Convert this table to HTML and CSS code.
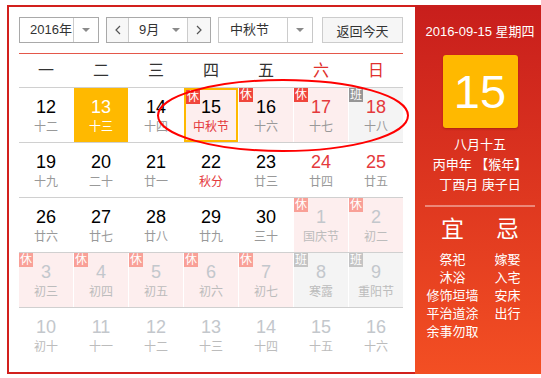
FILE: index.html
```html
<!DOCTYPE html>
<html lang="zh-CN">
<head>
<meta charset="utf-8">
<title>万年历</title>
<link rel="stylesheet" href="styles.css">
</head>
<body>
<div class="calendar">
  <div class="main">
    <div class="toolbar">
      <div class="select year"><span class="val">2016年</span><span class="drop"></span></div>
      <div class="month-group">
        <span class="nav prev"><svg width="6" height="10" viewBox="0 0 6 10"><polyline points="5,1 1,5 5,9" fill="none" stroke="#555" stroke-width="1.2"/></svg></span>
        <div class="month"><span class="val">9月</span><span class="drop plain"></span></div>
        <span class="nav next"><svg width="6" height="10" viewBox="0 0 6 10"><polyline points="1,1 5,5 1,9" fill="none" stroke="#555" stroke-width="1.2"/></svg></span>
      </div>
      <div class="select holiday"><span class="val">中秋节</span><span class="drop"></span></div>
      <button class="today-btn">返回今天</button>
    </div>
    <div class="rule"></div>
    <div class="weekdays">
      <span>一</span><span>二</span><span>三</span><span>四</span><span>五</span><span class="we">六</span><span class="we">日</span>
    </div>
    <div class="week">
      <div class="cell"><span class="num">12</span><span class="lunar">十二</span></div>
      <div class="cell today"><span class="num">13</span><span class="lunar">十三</span></div>
      <div class="cell"><span class="num">14</span><span class="lunar">十四</span></div>
      <div class="cell rest selected"><i class="tag">休</i><span class="num">15</span><span class="lunar fest">中秋节</span></div>
      <div class="cell rest"><i class="tag">休</i><span class="num">16</span><span class="lunar">十六</span></div>
      <div class="cell rest"><i class="tag">休</i><span class="num red">17</span><span class="lunar">十七</span></div>
      <div class="cell work"><i class="tag ban">班</i><span class="num red">18</span><span class="lunar">十八</span></div>
    </div>
    <div class="week">
      <div class="cell"><span class="num">19</span><span class="lunar">十九</span></div>
      <div class="cell"><span class="num">20</span><span class="lunar">二十</span></div>
      <div class="cell"><span class="num">21</span><span class="lunar">廿一</span></div>
      <div class="cell"><span class="num">22</span><span class="lunar fest">秋分</span></div>
      <div class="cell"><span class="num">23</span><span class="lunar">廿三</span></div>
      <div class="cell"><span class="num red">24</span><span class="lunar">廿四</span></div>
      <div class="cell"><span class="num red">25</span><span class="lunar">廿五</span></div>
    </div>
    <div class="week">
      <div class="cell"><span class="num">26</span><span class="lunar">廿六</span></div>
      <div class="cell"><span class="num">27</span><span class="lunar">廿七</span></div>
      <div class="cell"><span class="num">28</span><span class="lunar">廿八</span></div>
      <div class="cell"><span class="num">29</span><span class="lunar">廿九</span></div>
      <div class="cell"><span class="num">30</span><span class="lunar">三十</span></div>
      <div class="cell rest muted"><i class="tag">休</i><span class="num">1</span><span class="lunar">国庆节</span></div>
      <div class="cell rest muted"><i class="tag">休</i><span class="num">2</span><span class="lunar">初二</span></div>
    </div>
    <div class="week">
      <div class="cell rest muted"><i class="tag">休</i><span class="num">3</span><span class="lunar">初三</span></div>
      <div class="cell rest muted"><i class="tag">休</i><span class="num">4</span><span class="lunar">初四</span></div>
      <div class="cell rest muted"><i class="tag">休</i><span class="num">5</span><span class="lunar">初五</span></div>
      <div class="cell rest muted"><i class="tag">休</i><span class="num">6</span><span class="lunar">初六</span></div>
      <div class="cell rest muted"><i class="tag">休</i><span class="num">7</span><span class="lunar">初七</span></div>
      <div class="cell work muted"><i class="tag ban">班</i><span class="num">8</span><span class="lunar">寒露</span></div>
      <div class="cell work muted"><i class="tag ban">班</i><span class="num">9</span><span class="lunar">重阳节</span></div>
    </div>
    <div class="week">
      <div class="cell muted"><span class="num">10</span><span class="lunar">初十</span></div>
      <div class="cell muted"><span class="num">11</span><span class="lunar">十一</span></div>
      <div class="cell muted"><span class="num">12</span><span class="lunar">十二</span></div>
      <div class="cell muted"><span class="num">13</span><span class="lunar">十三</span></div>
      <div class="cell muted"><span class="num">14</span><span class="lunar">十四</span></div>
      <div class="cell muted"><span class="num">15</span><span class="lunar">十五</span></div>
      <div class="cell muted"><span class="num">16</span><span class="lunar">十六</span></div>
    </div>
    <svg class="mark" width="270" height="82" viewBox="0 0 270 82"><ellipse cx="133" cy="39.5" rx="125" ry="35.5" fill="none" stroke="#ff0000" stroke-width="2"/></svg>
  </div>
  <aside class="panel">
    <div class="date">2016-09-15 星期四</div>
    <div class="big">15</div>
    <div class="lunar-info">
      <div>八月十五</div>
      <div>丙申年 【猴年】</div>
      <div>丁酉月 庚子日</div>
    </div>
    <div class="divider"></div>
    <div class="yiji">
      <div class="col">
        <h3>宜</h3>
        <ul><li>祭祀</li><li>沐浴</li><li>修饰垣墙</li><li>平治道涂</li><li>余事勿取</li></ul>
      </div>
      <div class="col">
        <h3>忌</h3>
        <ul><li>嫁娶</li><li>入宅</li><li>安床</li><li>出行</li></ul>
      </div>
    </div>
  </aside>
</div>
</body>
</html>
```

FILE: styles.css
```css
* { box-sizing: border-box; }
html, body { margin: 0; padding: 0; }
body {
  width: 541px;
  height: 378px;
  overflow: hidden;
  background: #fff;
  font-family: "Liberation Sans", Arial, "Noto Sans CJK SC", sans-serif;
}

.calendar {
  display: flex;
  margin: 5px 0 0 7px;
  width: 538px;
  height: 369px;
}

.main {
  position: relative;
  flex: none;
  width: 408px;
  border: 2px solid #d2201d;
  border-right: 0;
  padding: 10px 12px 0 10px;
}

/* toolbar */
.toolbar { display: flex; height: 26px; }
.select {
  display: flex;
  height: 26px;
  border: 1px solid #a9a9a9;
  font-size: 13px;
  color: #333;
  background: #fff;
}
.val { flex: 1; padding-left: 10px; line-height: 24px; white-space: nowrap; }
.drop {
  flex: none;
  width: 25px;
  border-left: 1px solid #ccc;
  display: flex;
  align-items: center;
  justify-content: center;
}
.drop::after {
  content: "";
  border-left: 4px solid transparent;
  border-right: 4px solid transparent;
  border-top: 4px solid #8a8a8a;
}
.drop.plain { border-left: 0; width: 22px; }
.year { width: 80px; }

.month-group {
  display: flex;
  width: 105px;
  height: 26px;
  margin-left: 7px;
  border: 1px solid #a9a9a9;
}
.nav {
  flex: none;
  width: 22px;
  display: flex;
  align-items: center;
  justify-content: center;
  background: #f7f7f7;
}
.prev { border-right: 1px solid #ccc; }
.next { border-left: 1px solid #ccc; width: 23px; }
.month { flex: 1; display: flex; font-size: 13px; color: #333; }

.holiday { width: 95px; margin-left: 7px; border-color: #c8c8c8; }
.holiday .val { padding-left: 11px; }

.today-btn {
  width: 81px;
  height: 26px;
  margin-left: 9px;
  padding: 0;
  border: 1px solid #ccc;
  background: #f6f6f6;
  font-family: inherit;
  font-size: 13px;
  color: #333;
}

.rule { height: 1px; margin-top: 10px; background: #e4574a; }

/* grid */
.weekdays, .week {
  display: grid;
  grid-template-columns: repeat(7, 1fr);
  column-gap: 1px;
}
.weekdays {
  height: 33px;
  font-size: 16px;
  line-height: 33px;
  text-align: center;
  color: #333;
}
.weekdays .we { color: #e0302c; }

.week { height: 55px; border-top: 1px solid #d0d0d0; }
.cell { position: relative; text-align: center; padding-top: 9px; }
.num { display: block; font-size: 18px; line-height: 20px; color: #000; }
.lunar { display: block; font-size: 12px; line-height: 20px; color: #999; }
.num.red { color: #e4393c; }
.lunar.fest { color: #e4393c; }

.rest { background: #fdeeee; }
.work { background: #f4f4f4; }
.today { background: #ffb900; }
.today .num, .today .lunar { color: #fff; }
.selected { border: 2px solid #ffb900; padding-top: 7px; }

.tag {
  position: absolute;
  left: 0;
  top: 0;
  width: 14px;
  height: 14px;
  font-style: normal;
  font-size: 12px;
  line-height: 14px;
  color: #fff;
  background: #f0463c;
}
.tag.ban { background: #969696; }

.muted .num { color: #c3c7cc; }
.muted .lunar { color: #bcbcbc; }
.muted .tag { background: #f9a097; }
.muted .tag.ban { background: #c4c4c4; }

.mark { position: absolute; left: 141px; top: 69px; }

/* right panel */
.panel {
  flex: none;
  width: 130px;
  height: 369px;
  padding-top: 17px;
  background: linear-gradient(#c81e1c, #f34f23);
  color: #fff;
  text-align: center;
}
.date { font-size: 13px; line-height: 20px; white-space: nowrap; }
.big {
  width: 75px;
  height: 73px;
  margin: 13px auto 0;
  background: #ffb900;
  border-radius: 3px;
  box-shadow: 0 1px 2px rgba(120, 20, 0, 0.45);
  font-size: 47px;
  line-height: 73px;
}
.lunar-info { margin-top: 7px; font-size: 13px; line-height: 20px; white-space: nowrap; }
.divider {
  width: 110px;
  height: 2px;
  margin: 10px auto 0;
  background: rgba(255, 255, 255, 0.4);
}
.yiji { display: flex; justify-content: center; margin-top: 7px; }
.col { width: 55px; }
.col h3 { margin: 0; font-size: 23px; line-height: 30px; font-weight: normal; }
.col ul {
  list-style: none;
  margin: 7px 0 0;
  padding: 0;
  font-size: 13px;
  line-height: 18px;
  white-space: nowrap;
}
```
